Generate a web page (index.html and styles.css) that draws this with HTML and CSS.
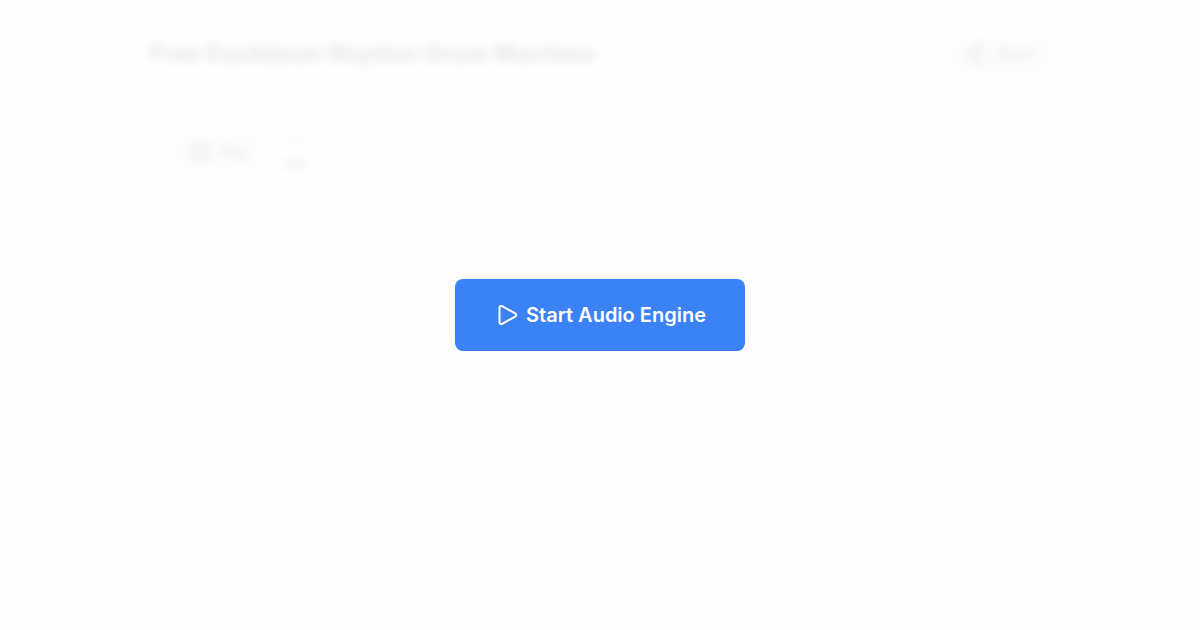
FILE: index.html
```html
<!DOCTYPE html>
<html lang="en">
<head>
<meta charset="utf-8">
<meta name="viewport" content="width=device-width, initial-scale=1">
<title>Free Euclidean Rhythm Drum Machine</title>
<link rel="stylesheet" href="styles.css">
</head>
<body>
<main class="app">
  <header class="header">
    <h1 class="title">Free Euclidean Rhythm Drum Machine</h1>
    <button class="button button-share" type="button">
      <svg class="icon" viewBox="0 0 24 24" aria-hidden="true"><circle cx="16" cy="5" r="3"/><circle cx="7" cy="12" r="3"/><circle cx="16" cy="19" r="3"/><path d="M9.500 13.500l4 4M13.500 6.500l-4 4"/></svg>
      Share
    </button>
  </header>
  <section class="transport">
    <button class="button button-play" type="button">
      <svg class="icon" viewBox="0 0 24 24" aria-hidden="true"><circle cx="12" cy="12" r="10"/><path d="M10 8l6 4-6 4z"/></svg>
      Play
    </button>
    <div class="tempo"><span class="tempo-value">120</span><span class="tempo-unit">BPM</span></div>
  </section>
</main>
<div class="overlay">
  <button class="start" type="button">
    <svg class="start-icon" viewBox="0 0 24 24" aria-hidden="true"><path d="M5.500 4.800a1.800 1.800 0 0 1 2.700-1.600l13 7.200a1.800 1.800 0 0 1 0 3.200l-13 7.200a1.800 1.800 0 0 1-2.700-1.600z"/></svg>
    Start Audio Engine
  </button>
</div>
</body>
</html>
```
FILE: styles.css
```css
* { box-sizing: border-box; }
body {
  margin: 0;
  min-height: 100vh;
  background: #fff;
  color: #171717;
  font-family: Inter, sans-serif;
}
.app {
  max-width: 964px;
  margin: 0 auto;
  padding: 32px;
}
.header {
  display: flex;
  align-items: center;
  justify-content: space-between;
  height: 44px;
}
.title {
  margin: 0;
  font-size: 24px;
  line-height: 32px;
  font-weight: 700;
}
.button {
  display: flex;
  align-items: center;
  gap: 8px;
  height: 36px;
  padding: 0 12px;
  border: 0;
  border-radius: 6px;
  background: #e4eaea;
  color: #222;
  font: 500 14px/20px Inter, sans-serif;
}
.button-share { padding: 0 16px 0 12px; }
.button-play { padding: 0 12px 0 12px; }
.icon {
  width: 24px;
  height: 24px;
  fill: none;
  stroke: currentColor;
  stroke-width: 2;
}
.transport {
  display: flex;
  align-items: center;
  gap: 24px;
  margin: 24px 0 0 10px;
  padding: 32px 16px;
  border-bottom: 2px solid #bbb;
}
.tempo {
  display: flex;
  flex-direction: column;
  align-items: center;
  gap: 8px;
  font-size: 10px;
  line-height: 16px;
}
.tempo-value { color: #888; }
.tempo-unit { font-weight: 600; }
.overlay {
  position: fixed;
  inset: 0;
  display: flex;
  align-items: center;
  justify-content: center;
  background: rgb(254 254 254 / 90%);
  backdrop-filter: blur(5px);
}
.start {
  display: flex;
  align-items: center;
  gap: 8px;
  padding: 22px 39px;
  border: 0;
  border-radius: 8px;
  background: #3b82f6;
  color: #fff;
  font: 600 20px/28px Inter, sans-serif;
}
.start-icon {
  width: 24px;
  height: 24px;
  fill: none;
  stroke: currentColor;
  stroke-width: 2;
  stroke-linejoin: round;
}
```
